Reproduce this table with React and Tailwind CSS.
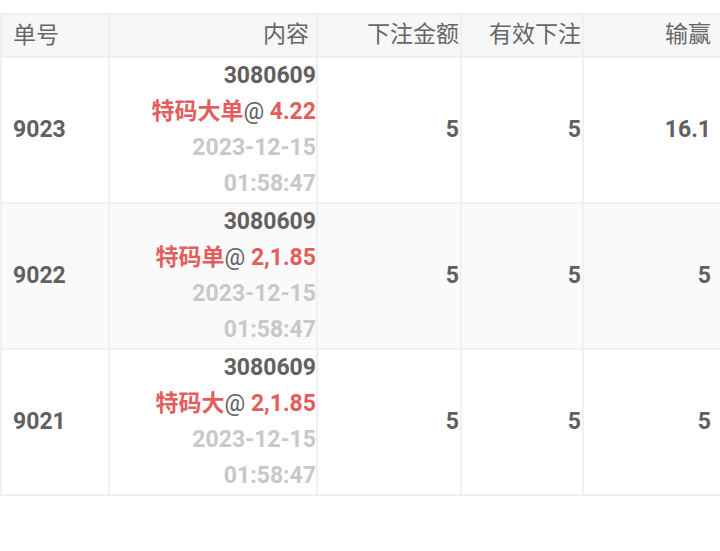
const rows = [
  { id: '9023', play: '特码大单', odds: '4.22', amount: '5', valid: '5', win: '16.1' },
  { id: '9022', play: '特码单', odds: '2,1.85', amount: '5', valid: '5', win: '5' },
  { id: '9021', play: '特码大', odds: '2,1.85', amount: '5', valid: '5', win: '5' },
]

const font = { fontFamily: 'Roboto, "Noto Sans CJK SC", sans-serif' }

export default function App() {
  return (
    <div className="bg-white w-[720px] h-[551px] pt-[13px]" style={font}>
      <table className="w-[720px] border-collapse table-fixed text-[23px]">
        <colgroup>
          <col className="w-[108px]" />
          <col className="w-[208px]" />
          <col className="w-[144px]" />
          <col className="w-[122px]" />
          <col className="w-[138px]" />
        </colgroup>
        <thead>
          <tr className="bg-[#f7f7f7] text-[#666] h-[43px] text-[23px]">
            <th className="border-2 border-[#f0f0f0] font-normal text-left pl-[11px] leading-[38px]">单号</th>
            <th className="border-2 border-[#f0f0f0] font-normal text-right pr-[7px]">内容</th>
            <th className="border-2 border-[#f0f0f0] font-normal text-right pr-[1px] whitespace-nowrap">下注金额</th>
            <th className="border-2 border-[#f0f0f0] font-normal text-right pr-[1px] whitespace-nowrap">有效下注</th>
            <th className="border-2 border-[#f0f0f0] font-normal text-right pr-[9px]">输赢</th>
          </tr>
        </thead>
        <tbody>
          {rows.map((r, i) => (
            <tr key={r.id} className={i === 1 ? 'bg-[#fafafa]' : 'bg-white'}>
              <td className="border-2 border-[#f0f0f0] pl-[11px] font-bold text-[#606060] align-middle">{r.id}</td>
              <td className="border-2 border-[#f0f0f0] pr-0 text-right font-bold leading-[36px] whitespace-nowrap">
                <div className="text-[#606060]">3080609</div>
                <div>
                  <span className="text-[#e35d5d]">{r.play}</span>
                  <span className="text-[#606060] font-normal">@ </span>
                  <span className="text-[#e35d5d]">{r.odds}</span>
                </div>
                <div className="text-[#c8c8c8]">2023-12-15</div>
                <div className="text-[#c8c8c8]">01:58:47</div>
              </td>
              <td className="border-2 border-[#f0f0f0] pr-[1px] text-right font-bold text-[#606060]">{r.amount}</td>
              <td className="border-2 border-[#f0f0f0] pr-[1px] text-right font-bold text-[#606060]">{r.valid}</td>
              <td className="border-2 border-[#f0f0f0] pr-[9px] text-right font-bold text-[#606060]">{r.win}</td>
            </tr>
          ))}
        </tbody>
      </table>
    </div>
  )
}
